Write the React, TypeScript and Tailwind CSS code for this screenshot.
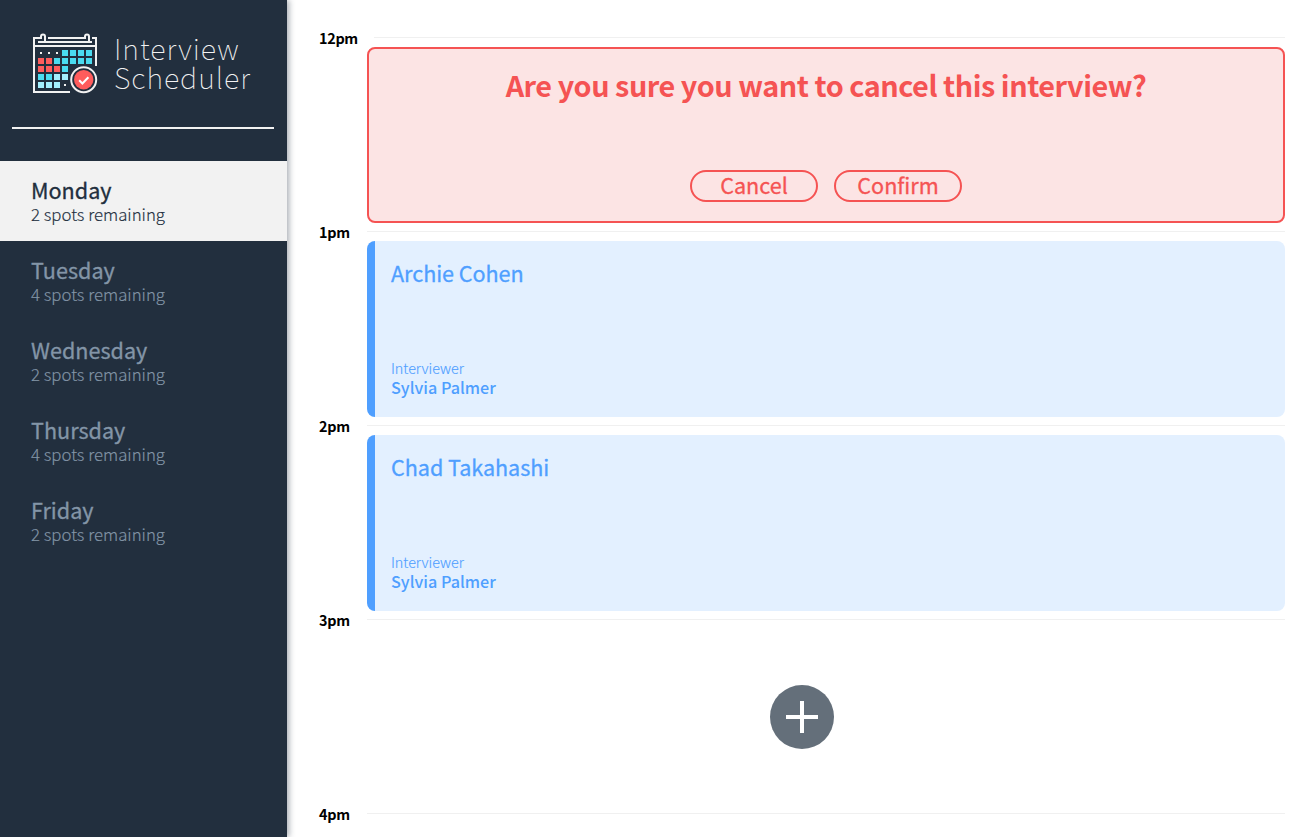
const days = [
  { name: "Monday", spots: "2 spots remaining", selected: true },
  { name: "Tuesday", spots: "4 spots remaining", selected: false },
  { name: "Wednesday", spots: "2 spots remaining", selected: false },
  { name: "Thursday", spots: "4 spots remaining", selected: false },
  { name: "Friday", spots: "2 spots remaining", selected: false },
];

const CYAN = "#4adcf0";
const PALE = "#a4effd";
const RED = "#ff5c5c";

const calendarRows: (string | null)[][] = [
  [null, null, null, CYAN, CYAN, CYAN, CYAN],
  [RED, RED, CYAN, CYAN, CYAN, CYAN, CYAN],
  [RED, RED, RED, CYAN],
  [CYAN, CYAN, PALE, PALE],
  [PALE, PALE, PALE, null],
];

function CalendarLogo() {
  return (
    <svg width="66" height="62" viewBox="0 0 66 62" className="block shrink-0" aria-hidden="true">
      <g fill="none" stroke="#f2f2f2" strokeWidth="2">
        <path d="M37 60H1V6H8V4.4a2 2 0 0 1 4 0V10M15 6H52V4.4a2 2 0 0 1 4 0V10M59 6H63V34M5 10H59M1 14H63" />
      </g>
      {calendarRows.map((row, r) =>
        row.map((fill, c) =>
          fill ? (
            <rect key={`${r}-${c}`} x={5 + c * 8} y={18 + r * 8} width="6" height="6" fill={fill} />
          ) : (
            <rect key={`${r}-${c}`} x={7 + c * 8} y={20 + r * 8} width="2" height="2" fill="#f2f2f2" />
          ),
        ),
      )}
      <circle cx="50.7" cy="47.7" r="12.5" fill="#222f3e" stroke="#f2f2f2" strokeWidth="2" />
      <circle cx="50.7" cy="47.7" r="9.7" fill={RED} />
      <path d="M46.2 48.3l3.2 3.2 6-6.2" fill="none" stroke="#fff" strokeWidth="2" />
    </svg>
  );
}

function Hour({ time }: { time: string }) {
  return (
    <header className="flex h-[18px] items-start">
      <h4 className="min-w-12 pr-4 text-[14.4px] leading-[18px] font-bold tracking-[-0.3px] text-black">{time}</h4>
      <div className="mt-2 h-px flex-1 bg-[#f0f0f0]" />
    </header>
  );
}

function Booking({ student, interviewer }: { student: string; interviewer: string }) {
  return (
    <div className="ml-12 flex h-44 flex-col justify-between rounded-lg border-l-8 border-[#4f9fff] bg-[#e3f0ff] px-4 pt-4 pb-5 text-[#4f9fff]">
      <h2 className="text-[21.6px] leading-8 tracking-[-0.05px] [-webkit-text-stroke:0.3px]">{student}</h2>
      <div>
        <h4 className="text-[14.4px] leading-[18px] font-light tracking-[-0.05px] [-webkit-text-stroke:0.15px]">
          Interviewer
        </h4>
        <h3 className="text-[16.2px] leading-5 font-medium">{interviewer}</h3>
      </div>
    </div>
  );
}

function OutlineButton({ label }: { label: string }) {
  return (
    <button className="flex h-8 w-32 items-start justify-center rounded-2xl border-2 border-[#f55353] text-[21.6px] leading-[26px] [-webkit-text-stroke:0.3px]">
      {label}
    </button>
  );
}

export default function App() {
  return (
    <main className="flex h-[837px] overflow-hidden bg-white font-['Noto_Sans_CJK_SC','Noto_Sans',sans-serif] antialiased">
      <aside className="z-10 w-[287px] shrink-0 bg-[#222f3e] shadow-[2px_0_6px_rgba(34,47,62,0.4)]">
        <div className="flex h-[127px] pt-8 pl-[33px]">
          <CalendarLogo />
          <div className="pt-px pl-[15px] text-[28.8px] leading-[29px] font-thin tracking-[0.95px] text-[#f2f2f2]">
            <div>Interview</div>
            <div>Scheduler</div>
          </div>
        </div>
        <hr className="mr-[13px] mb-8 ml-3 h-0.5 border-0 bg-[#f2f2f2]" />
        <ul>
          {days.map((day) => (
            <li
              key={day.name}
              className={
                day.selected
                  ? "h-20 bg-[#f2f2f2] pt-4 pl-[31px] text-[#222f3e]"
                  : "h-20 pt-4 pl-[31px] text-[#8395a7]"
              }
            >
              <h2 className="text-[21.6px] leading-[26px] [-webkit-text-stroke:0.3px]">{day.name}</h2>
              <h3 className="text-[16.8px] leading-[22px] font-light [-webkit-text-stroke:0.15px]">{day.spots}</h3>
            </li>
          ))}
        </ul>
      </aside>
      <section className="min-w-0 flex-1 pt-[29px] pr-6 pl-8">
        <Hour time="12pm" />
        <div className="ml-12 flex h-44 flex-col items-center justify-between rounded-lg border-2 border-[#f55353] bg-[#fce4e4] pt-4 pb-[19px] text-[#f55353]">
          <h1 className="text-[28.8px] leading-10 font-bold tracking-[-0.46px]">
            Are you sure you want to cancel this interview?
          </h1>
          <div className="flex gap-4">
            <OutlineButton label="Cancel" />
            <OutlineButton label="Confirm" />
          </div>
        </div>
        <Hour time="1pm" />
        <Booking student="Archie Cohen" interviewer="Sylvia Palmer" />
        <Hour time="2pm" />
        <Booking student="Chad Takahashi" interviewer="Sylvia Palmer" />
        <Hour time="3pm" />
        <div className="flex h-44 items-center justify-center">
          <button className="flex size-16 items-center justify-center rounded-full bg-[#646f7a]" aria-label="Add">
            <svg width="32" height="32" viewBox="0 0 32 32" fill="#fff">
              <path d="M14 0h4v14h14v4H18v14h-4V18H0v-4h14z" />
            </svg>
          </button>
        </div>
        <Hour time="4pm" />
      </section>
    </main>
  );
}
